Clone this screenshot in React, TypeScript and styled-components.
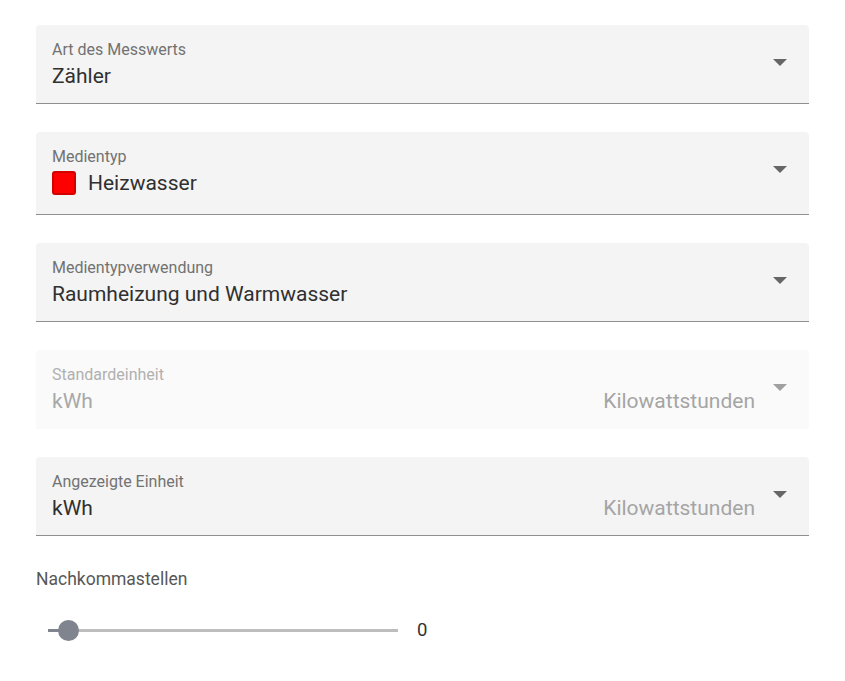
import React from "react";
import styled, { createGlobalStyle } from "styled-components";

interface SelectField {
  label: string;
  value: string;
  unit?: string;
  swatch?: string;
  disabled?: boolean;
}

const fields: SelectField[] = [
  { label: "Art des Messwerts", value: "Zähler" },
  { label: "Medientyp", value: "Heizwasser", swatch: "#ff0000" },
  { label: "Medientypverwendung", value: "Raumheizung und Warmwasser" },
  { label: "Standardeinheit", value: "kWh", unit: "Kilowattstunden", disabled: true },
  { label: "Angezeigte Einheit", value: "kWh", unit: "Kilowattstunden" },
];

const GlobalStyle = createGlobalStyle`
  body {
    margin: 0;
    background: #ffffff;
    font-family: Roboto, "Liberation Sans", sans-serif;
  }
`;

const App: React.FC = () => {
  return (
    <>
      <GlobalStyle />
      <StyledForm>
        {fields.map((field) => (
          <StyledField key={field.label} $disabled={field.disabled}>
            <StyledContent>
              <StyledLabel $disabled={field.disabled}>{field.label}</StyledLabel>
              <StyledValueRow $tall={!!field.swatch}>
                <StyledValue $disabled={field.disabled}>
                  {field.swatch && <StyledSwatch $color={field.swatch} />}
                  {field.value}
                </StyledValue>
                {field.unit && <StyledUnit>{field.unit}</StyledUnit>}
              </StyledValueRow>
            </StyledContent>
            <StyledArrow
              width="14"
              height="7"
              viewBox="0 0 14 7"
              $disabled={field.disabled}
            >
              <polygon points="0,0 14,0 7,7" />
            </StyledArrow>
          </StyledField>
        ))}

        <StyledSliderBlock>
          <StyledSliderLabel>Nachkommastellen</StyledSliderLabel>
          <StyledSliderRow>
            <StyledTrack>
              <StyledFilled />
              <StyledThumb />
            </StyledTrack>
            <StyledSliderValue>0</StyledSliderValue>
          </StyledSliderRow>
        </StyledSliderBlock>
      </StyledForm>
    </>
  );
};

export default App;

const StyledForm = styled.div`
  display: flex;
  flex-direction: column;
  gap: 28px;
  padding: 25px 36px;
`;

const StyledField = styled.div<{ $disabled?: boolean }>`
  display: flex;
  align-items: flex-start;
  padding: 15px 22px 14px 16px;
  background: ${(p) => (p.$disabled ? "#fafafa" : "#f4f4f4")};
  border-radius: 4px 4px 0 0;
  border-bottom: 1px solid ${(p) => (p.$disabled ? "transparent" : "#8f8f8f")};
`;

const StyledContent = styled.div`
  flex: 1;
  display: flex;
  flex-direction: column;
  gap: 3px;
`;

const StyledLabel = styled.div<{ $disabled?: boolean }>`
  font-size: 16px;
  line-height: 20px;
  color: ${(p) => (p.$disabled ? "#b0b0b0" : "#727272")};
`;

const StyledValueRow = styled.div<{ $tall: boolean }>`
  display: flex;
  align-items: center;
  justify-content: space-between;
  min-height: 26px;
  padding-bottom: ${(p) => (p.$tall ? "4px" : "0")};
`;

const StyledValue = styled.div<{ $disabled?: boolean }>`
  display: flex;
  align-items: center;
  gap: 12px;
  font-size: 21px;
  line-height: 26px;
  color: ${(p) => (p.$disabled ? "#a8a8a8" : "#303030")};
`;

const StyledSwatch = styled.span<{ $color: string }>`
  width: 24px;
  height: 24px;
  box-sizing: border-box;
  border-radius: 3px;
  border: 2px solid #d40000;
  background: ${(p) => p.$color};
`;

const StyledUnit = styled.div`
  font-size: 21px;
  line-height: 26px;
  color: #a5a5a5;
`;

const StyledArrow = styled.svg<{ $disabled?: boolean }>`
  margin: 19px 0 0 18px;
  flex-shrink: 0;
  fill: ${(p) => (p.$disabled ? "#a0a0a0" : "#666666")};
`;

const StyledSliderBlock = styled.div`
  display: flex;
  flex-direction: column;
  gap: 28px;
  margin-top: 4px;
`;

const StyledSliderLabel = styled.div`
  font-size: 17.5px;
  line-height: 22px;
  color: #575757;
`;

const StyledSliderRow = styled.div`
  display: flex;
  align-items: center;
  padding-left: 12px;
  height: 24px;
`;

const StyledTrack = styled.div`
  position: relative;
  width: 350px;
  height: 3px;
  background: #bdbdbd;
`;

const StyledFilled = styled.div`
  width: 20px;
  height: 100%;
  background: #80848f;
`;

const StyledThumb = styled.div`
  position: absolute;
  left: 10px;
  top: 50%;
  width: 21px;
  height: 21px;
  margin-top: -10.5px;
  border-radius: 50%;
  background: #80848f;
`;

const StyledSliderValue = styled.div`
  margin-left: 19px;
  font-size: 18.5px;
  line-height: 22px;
  color: #333333;
`;
